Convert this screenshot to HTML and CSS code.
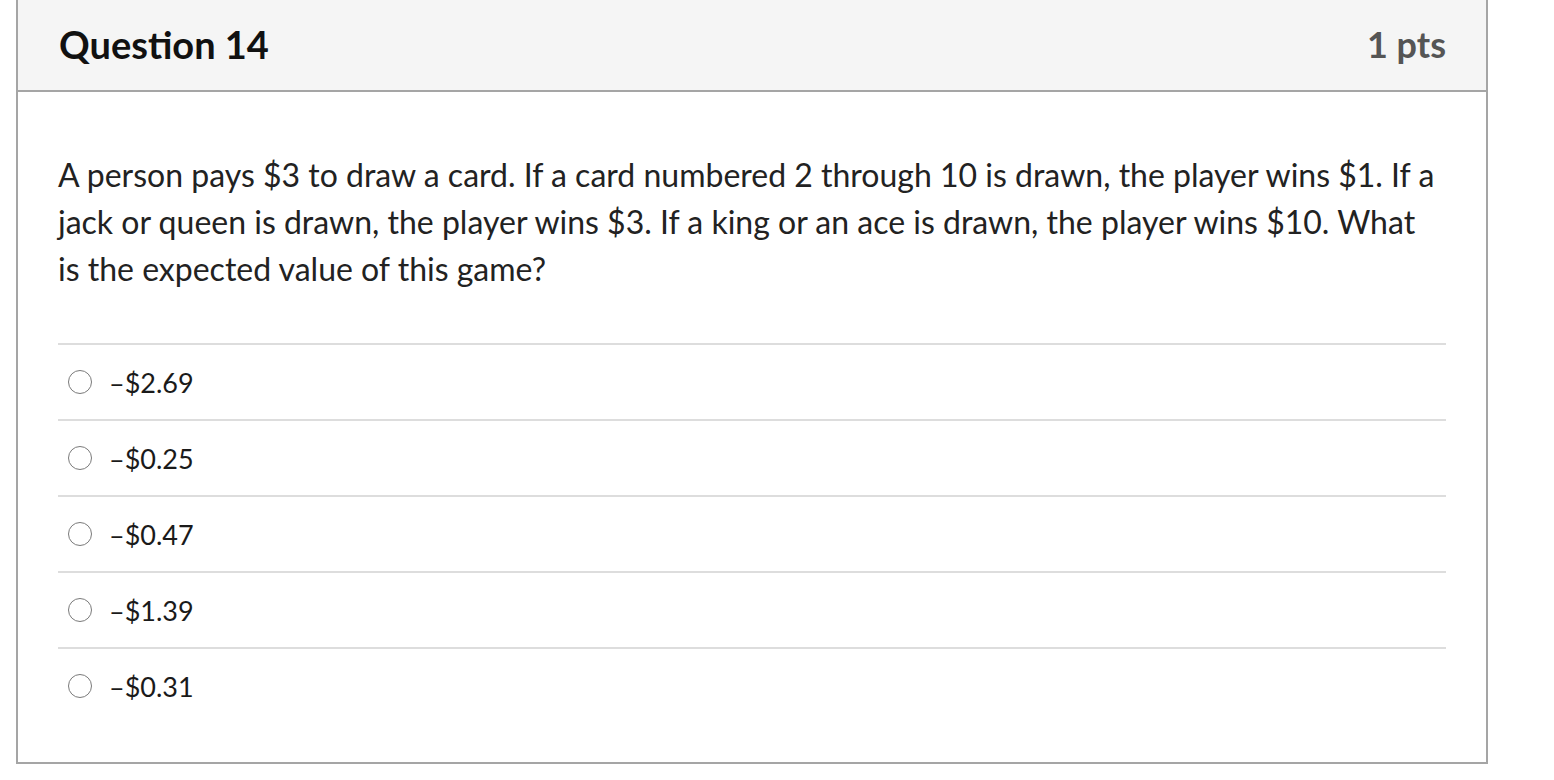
FILE: index.html
```html
<!DOCTYPE html>
<html lang="en">
<head>
<meta charset="utf-8">
<title>Question 14</title>
<link rel="stylesheet" href="styles.css">
</head>
<body>
<div class="question">
  <div class="q-header">
    <h2 class="q-name">Question 14</h2>
    <span class="q-points">1 pts</span>
  </div>
  <div class="q-body">
    <p class="q-text">A person pays $3 to draw a card. If a card numbered 2 through 10 is drawn, the player wins $1. If a jack or queen is drawn, the player wins $3. If a king or an ace is drawn, the player wins $10. What is the expected value of this game?</p>
    <ul class="answers">
      <li class="answer"><span class="radio"></span><span class="answer-text">–$2.69</span></li>
      <li class="answer"><span class="radio"></span><span class="answer-text">–$0.25</span></li>
      <li class="answer"><span class="radio"></span><span class="answer-text">–$0.47</span></li>
      <li class="answer"><span class="radio"></span><span class="answer-text">–$1.39</span></li>
      <li class="answer"><span class="radio"></span><span class="answer-text">–$0.31</span></li>
    </ul>
  </div>
</div>
</body>
</html>
```
FILE: styles.css
```css
html, body {
  margin: 0;
  padding: 0;
  background: #ffffff;
}
body {
  font-family: Lato, "Noto Sans", sans-serif;
  color: #222222;
}
.question {
  margin-left: 16px;
  width: 1472px;
  box-sizing: border-box;
  border: 2px solid #a5a5a5;
  border-top: none;
}
.q-header {
  height: 92px;
  box-sizing: border-box;
  background: #f5f5f5;
  border-bottom: 2px solid #a5a5a5;
  display: flex;
  align-items: center;
  justify-content: space-between;
  padding: 0 40px 2px 41px;
}
.q-name {
  margin: 0;
  font-size: 38px;
  font-weight: 700;
  color: #111111;
}
.q-points {
  font-size: 36px;
  font-weight: 700;
  color: #555555;
}
.q-body {
  padding: 59px 40px 39px 40px;
}
.q-text {
  margin: 0 0 51px 0;
  max-width: 1380px;
  font-size: 32px;
  line-height: 47px;
}
.answers {
  list-style: none;
  margin: 0;
  padding: 0;
}
.answer {
  display: flex;
  align-items: center;
  height: 76px;
  box-sizing: border-box;
  border-top: 2px solid #dddddd;
}
.radio {
  width: 22px;
  height: 22px;
  border: 1.5px solid #7a7a7a;
  border-radius: 50%;
  margin-left: 10px;
  margin-right: 17px;
  flex: none;
}
.answer-text {
  font-size: 27px;
  color: #1a1a1a;
}
```
